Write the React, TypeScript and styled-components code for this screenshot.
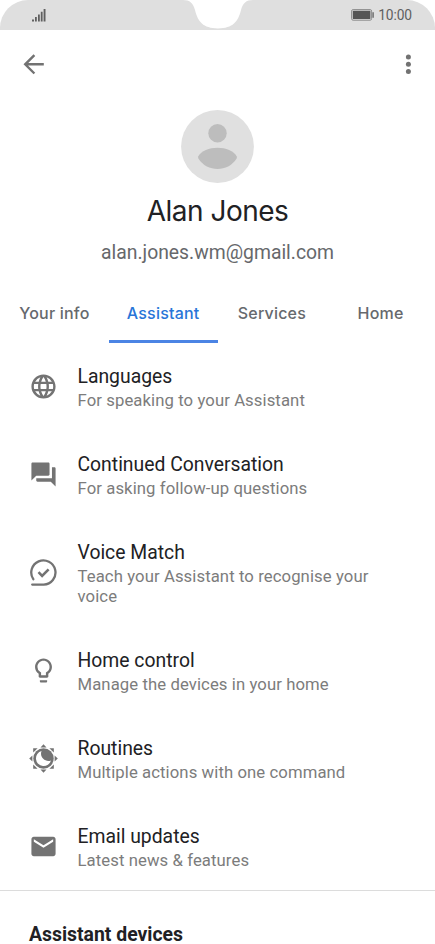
import React from "react";
import styled, { createGlobalStyle } from "styled-components";

const GlobalStyle = createGlobalStyle`
  * { box-sizing: border-box; }
  body { margin: 0; background: #fff; overflow: hidden; }
`;

const Screen = styled.div`
  width: 435px;
  height: 944px;
  overflow: hidden;
  display: flex;
  flex-direction: column;
  background: #fff;
  font-family: Roboto, sans-serif;
  color: #212124;
`;

const StatusBar = styled.header`
  flex: none;
  height: 30px;
  display: grid;
  grid-template-columns: 1fr 70px 1fr;
  background: #dfdfdf;
  border-radius: 28px 28px 0 0;
`;

const StatusSide = styled.div<{ $end?: boolean }>`
  display: flex;
  align-items: center;
  justify-content: ${(p) => (p.$end ? "flex-end" : "flex-start")};
  gap: 4px;
  padding: ${(p) => (p.$end ? "0 23px 0 0" : "0 0 0 32px")};
`;

const Clock = styled.span`
  font-size: 13.8px;
  line-height: 30px;
  letter-spacing: -0.1px;
  color: #606060;
`;

const AppBar = styled.div`
  flex: none;
  height: 68px;
  display: flex;
  align-items: center;
  justify-content: space-between;
  padding: 0 12px 0 19px;
`;

const IconButton = styled.button`
  display: flex;
  padding: 0;
  border: 0;
  background: none;
  color: #727272;
`;

const Profile = styled.section`
  flex: none;
  height: 188px;
  padding-top: 12px;
  display: flex;
  flex-direction: column;
  align-items: center;
`;

const Name = styled.h1`
  margin: 10px 0 0;
  font: 400 28px/36px Inter, sans-serif;
  letter-spacing: -0.5px;
`;

const Email = styled.p`
  margin: 12px 0 0;
  font-size: 19.35px;
  line-height: 24px;
  color: #66686b;
`;

const Tabs = styled.nav`
  flex: none;
  height: 57px;
  display: grid;
  grid-template-columns: repeat(4, 1fr);
`;

const Tab = styled.button<{ $active?: boolean; $spacing: number }>`
  padding: 0;
  border: 0;
  border-bottom: 3px solid ${(p) => (p.$active ? "#4b84e4" : "transparent")};
  background: none;
  font: 500 16px/24px Inter, sans-serif;
  letter-spacing: ${(p) => p.$spacing}px;
  white-space: nowrap;
  color: ${(p) => (p.$active ? "#2875d8" : "#66696d")};
`;

const List = styled.ul`
  flex: none;
  margin: 0;
  padding: 1px 0 0;
  list-style: none;
  border-bottom: 1px solid #dcdcdc;
`;

const Row = styled.li`
  display: grid;
  grid-template-columns: 29px 1fr;
  column-gap: 19.5px;
  align-items: center;
  padding: 21px 40px 21px 29px;
  color: #737373;

  &:last-child { padding-bottom: 19px; }
`;

const RowIcon = styled.span`
  display: flex;
  margin-bottom: 4px;
`;

const RowTitle = styled.div`
  font-size: 19.35px;
  line-height: 24px;
  color: #212124;
`;

const RowText = styled.div`
  margin-top: 2px;
  font-size: 16.7px;
  line-height: 20px;
  letter-spacing: 0.09px;
  color: #7c7c7c;
`;

const SectionTitle = styled.h2`
  margin: 34px 0 0 29px;
  font-size: 19.4px;
  font-weight: 700;
  line-height: 20px;
`;

const Glyph = ({ children, size = 29 }: { children: React.ReactNode; size?: number }) => (
  <svg width={size} height={size} viewBox="0 0 24 24" fill="currentColor">{children}</svg>
);

const GlobeIcon = () => (
  <Glyph><path d="M11.99 2C6.47 2 2 6.48 2 12s4.47 10 9.99 10C17.52 22 22 17.52 22 12S17.52 2 11.99 2zm6.93 6h-2.95a15.65 15.65 0 0 0-1.38-3.56A8.03 8.03 0 0 1 18.92 8zM12 4.04c.83 1.2 1.48 2.53 1.91 3.96h-3.82c.43-1.43 1.08-2.76 1.91-3.96zM4.26 14C4.1 13.36 4 12.69 4 12s.1-1.36.26-2h3.38c-.08.66-.14 1.32-.14 2s.06 1.34.14 2H4.26zm.82 2h2.95c.32 1.25.78 2.45 1.38 3.56A7.987 7.987 0 0 1 5.08 16zm2.95-8H5.08a7.987 7.987 0 0 1 4.33-3.56A15.65 15.65 0 0 0 8.03 8zM12 19.96c-.83-1.2-1.48-2.53-1.91-3.96h3.82c-.43 1.43-1.08 2.76-1.91 3.96zM14.34 14H9.66c-.09-.66-.16-1.32-.16-2s.07-1.35.16-2h4.68c.09.65.16 1.32.16 2s-.07 1.34-.16 2zm.25 5.56c.6-1.11 1.06-2.31 1.38-3.56h2.95a8.03 8.03 0 0 1-4.33 3.56zM16.36 14c.08-.66.14-1.32.14-2s-.06-1.34-.14-2h3.38c.16.64.26 1.31.26 2s-.1 1.36-.26 2h-3.38z" /></Glyph>
);
const ChatIcon = () => (
  <Glyph><path d="M21 6h-2v9H6v2c0 .55.45 1 1 1h11l4 4V7c0-.55-.45-1-1-1zm-4 6V3c0-.55-.45-1-1-1H3c-.55 0-1 .45-1 1v14l4-4h10c.55 0 1-.45 1-1z" /></Glyph>
);
const VoiceIcon = () => (
  <svg width="29" height="29" viewBox="0 0 29 29" fill="none" stroke="currentColor" strokeWidth="2.3">
    <path d="M4.3 21.2A12.1 12.1 0 1 1 14.7 26.6H3.2" strokeLinecap="round" />
    <path d="M9.5 14.2l3.6 3.7 6.5-6.6" strokeWidth="2.6" />
  </svg>
);
const BulbIcon = () => (
  <Glyph><path d="M9 21c0 .55.45 1 1 1h4c.55 0 1-.45 1-1v-1H9v1zm3-19C8.14 2 5 5.14 5 9c0 2.38 1.19 4.47 3 5.74V17c0 .55.45 1 1 1h6c.55 0 1-.45 1-1v-2.26c1.81-1.27 3-3.36 3-5.74 0-3.86-3.14-7-7-7zm2.85 11.1l-.85.6V16h-4v-2.3l-.85-.6A4.997 4.997 0 0 1 7 9c0-2.76 2.24-5 5-5s5 2.24 5 5c0 1.63-.8 3.16-2.15 4.1z" /></Glyph>
);
const RoutineIcon = () => (
  <svg width="29" height="29" viewBox="0 0 29 29" fill="currentColor">
    {[0, 90, 180, 270].map((a) => (
      <g key={a} transform={`rotate(${a} 14.5 14.5)`}>
        <path d="M14.5.2l3 3.2h-6z" />
        <path d="M20.4 4.2H24.8V8.6z" />
      </g>
    ))}
    <circle cx="14.5" cy="14.5" r="10.2" />
    <path d="M12.6 7.1A7.6 7.6 0 1 0 21.900 16.400C16.500 18.800 10 12.800 12.600 7.100z" fill="#fff" />
  </svg>
);
const MailIcon = () => (
  <Glyph><path d="M20 4H4c-1.1 0-1.99.9-1.99 2L2 18c0 1.1.9 2 2 2h16c1.1 0 2-.9 2-2V6c0-1.1-.9-2-2-2zm0 4l-8 5-8-5V6l8 5 8-5v2z" /></Glyph>
);

const tabs = [
  { label: "Your info", spacing: 0.2 },
  { label: "Assistant", spacing: 0.2, active: true },
  { label: "Services", spacing: 0.2 },
  { label: "Home", spacing: 0.3 },
];

const settings = [
  { title: "Languages", text: "For speaking to your Assistant", Icon: GlobeIcon },
  { title: "Continued Conversation", text: "For asking follow-up questions", Icon: ChatIcon },
  { title: "Voice Match", text: "Teach your Assistant to recognise your voice", Icon: VoiceIcon },
  { title: "Home control", text: "Manage the devices in your home", Icon: BulbIcon },
  { title: "Routines", text: "Multiple actions with one command", Icon: RoutineIcon },
  { title: "Email updates", text: "Latest news & features", Icon: MailIcon },
];

export default function App() {
  return (
    <Screen>
      <GlobalStyle />
      <StatusBar>
        <StatusSide>
          <svg width="14" height="13" viewBox="0 0 14 13" fill="#606060">
            <path d="M0 10.500h2v2H0zM3 8h1.800v4.500H3zM6 5.500h1.800v7H6zM8.800 2.700h1.800v9.800H8.800zM11.600 0h1.900v12.500h-1.900z" />
          </svg>
        </StatusSide>
        <svg width="70" height="30" viewBox="0 0 70 30" fill="#fff">
          <path d="M0 0C7 0 10 3 12 10C15 22 20 28 35 28.5C50 28 55 22 58 10C60 3 63 0 70 0Z" />
        </svg>
        <StatusSide $end>
          <svg width="23" height="12" viewBox="0 0 23 12">
            <rect x=".6" y=".6" width="20" height="10.6" rx="1.5" fill="none" stroke="#8c8c8c" />
            <rect x="1.8" y="1.8" width="17.6" height="8.2" rx=".6" fill="#555" />
            <path d="M21.4 3.2h1.4v5.6h-1.4z" fill="#666" />
          </svg>
          <Clock>10:00</Clock>
        </StatusSide>
      </StatusBar>
      <AppBar>
        <IconButton aria-label="Back">
          <svg width="29" height="29" viewBox="0 0 29 29" fill="none" stroke="currentColor" strokeWidth="2.4">
            <path d="M24.8 14.3H6.7M15.4 5.1L6.2 14.3l9.2 9.2" />
          </svg>
        </IconButton>
        <IconButton aria-label="More">
          <svg width="29" height="29" viewBox="0 0 29 29" fill="currentColor">
            <circle cx="14.4" cy="7" r="2.5" /><circle cx="14.4" cy="14.3" r="2.5" /><circle cx="14.4" cy="21.6" r="2.5" />
          </svg>
        </IconButton>
      </AppBar>
      <Profile>
        <svg width="73" height="73" viewBox="0 0 73 73">
          <circle cx="36.5" cy="36.5" r="36.4" fill="#e0e0e0" />
          <circle cx="36.5" cy="23.2" r="9.2" fill="#bdbdbd" />
          <path d="M17.2 46.500C23 34.800 50 34.800 55.800 46.500Q56.200 47.500 55.600 48.500C47 62.500 26 62.500 17.400 48.500Q16.800 47.500 17.200 46.500Z" fill="#bdbdbd" />
        </svg>
        <Name>Alan Jones</Name>
        <Email>alan.jones.wm@gmail.com</Email>
      </Profile>
      <Tabs>
        {tabs.map((t) => (
          <Tab key={t.label} $active={t.active} $spacing={t.spacing}>{t.label}</Tab>
        ))}
      </Tabs>
      <List>
        {settings.map(({ title, text, Icon }) => (
          <Row key={title}>
            <RowIcon><Icon /></RowIcon>
            <div>
              <RowTitle>{title}</RowTitle>
              <RowText>{text}</RowText>
            </div>
          </Row>
        ))}
      </List>
      <SectionTitle>Assistant devices</SectionTitle>
    </Screen>
  );
}
